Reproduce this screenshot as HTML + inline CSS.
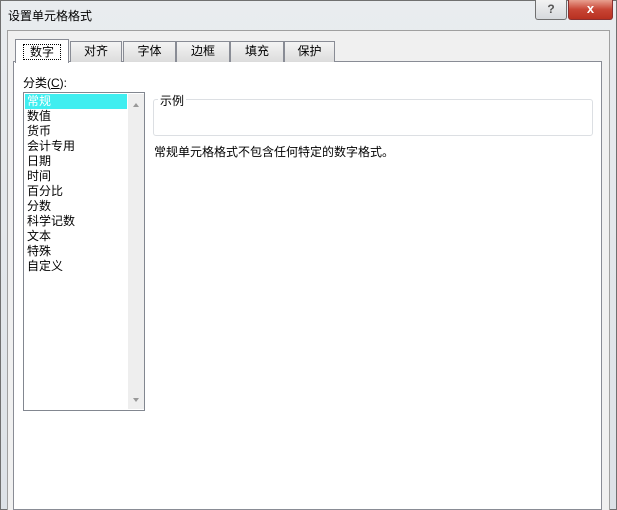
<!DOCTYPE html>
<html><head><meta charset="utf-8"><style>
*{margin:0;padding:0;box-sizing:border-box}
body{width:617px;height:510px;overflow:hidden;background:#dfe3e8;font-family:"Liberation Sans","Noto Sans CJK SC",sans-serif;font-size:12px;color:#000;position:relative}
.a{position:absolute}
.frame{left:0;top:0;width:617px;height:510px;background:linear-gradient(#e9ecef,#dde2e7);border:1px solid #707070}
.title{left:8px;top:7px;font-size:12px}
.inner{left:7px;top:30px;width:603px;height:480px;background:#f0f0f0;border:1px solid #a0a0a0;border-bottom:none}
.panel{left:13px;top:61px;width:589px;height:449px;background:#fff;border:1px solid #898c95}
.tab{top:41px;height:21px;background:linear-gradient(#f4f4f4,#dcdcdc);border:1px solid #898c95;border-bottom:none;text-align:center;line-height:19px}
.sel{top:39px;height:24px;background:#fff;z-index:2}
.list{left:23px;top:92px;width:122px;height:319px;border:1px solid #828790;background:#fff}
.item{left:3px;line-height:15px}
.sb{left:104px;top:1px;width:16px;height:315px;background:#eee}
.grp{left:153px;top:99px;width:440px;height:37px;border:1px solid #dcdfe3;border-radius:3px}
</style></head><body>
<div class="a frame"></div>
<div class="a title">设置单元格格式</div>
<div class="a" style="left:535px;top:0;width:32px;height:20px;border:1px solid #707070;border-top:none;border-radius:0 0 3px 3px;background:linear-gradient(#f2f2f2,#d6d9dd);text-align:center;font-weight:bold;color:#555;line-height:18px">?</div>
<div class="a" style="left:568px;top:0;width:45px;height:20px;border:1px solid #8a3030;border-top:none;border-radius:0 0 3px 3px;background:linear-gradient(#e8a090,#c84535 50%,#b83020);text-align:center;font-weight:bold;color:#fff;line-height:18px;font-size:13px">x</div>
<div class="a inner"></div>
<div class="a panel"></div>
<div class="a tab sel" style="left:15px;width:54px"><span style="border:1px dotted #000;padding:0 6px;position:relative;top:3px">数字</span></div>
<div class="a tab" style="left:70px;width:52px">对齐</div>
<div class="a tab" style="left:123px;width:53px">字体</div>
<div class="a tab" style="left:176px;width:54px">边框</div>
<div class="a tab" style="left:230px;width:54px">填充</div>
<div class="a tab" style="left:284px;width:51px">保护</div>
<div class="a" style="left:23px;top:74px">分类(<u>C</u>):</div>
<div class="a list">
<div class="a" style="left:1px;top:1px;width:102px;height:15px;background:#40eef0"></div>
<div class="a item" style="top:1px;color:#fff">常规</div>
<div class="a item" style="top:16px">数值</div>
<div class="a item" style="top:31px">货币</div>
<div class="a item" style="top:46px">会计专用</div>
<div class="a item" style="top:61px">日期</div>
<div class="a item" style="top:76px">时间</div>
<div class="a item" style="top:91px">百分比</div>
<div class="a item" style="top:106px">分数</div>
<div class="a item" style="top:121px">科学记数</div>
<div class="a item" style="top:136px">文本</div>
<div class="a item" style="top:151px">特殊</div>
<div class="a item" style="top:166px">自定义</div>
<div class="a sb"><div class="a" style="left:5px;top:9px;border:3px solid transparent;border-bottom:4px solid #999;border-top:none"></div><div class="a" style="left:5px;top:304px;border:3px solid transparent;border-top:4px solid #999;border-bottom:none"></div></div>
</div>
<div class="a grp"></div>
<div class="a" style="left:158px;top:92px;background:#fff;padding:0 2px">示例</div>
<div class="a" style="left:154px;top:143px">常规单元格格式不包含任何特定的数字格式。</div>
</body></html>
